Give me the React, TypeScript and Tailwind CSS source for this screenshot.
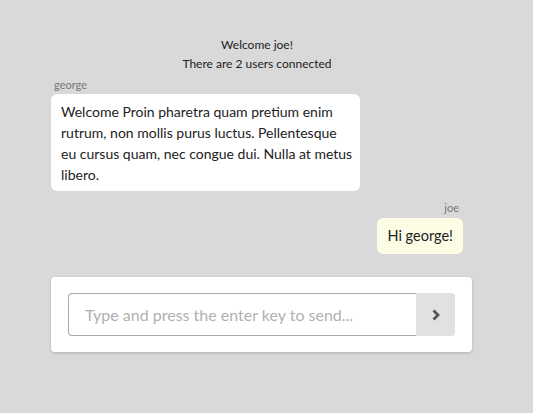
import React from "react";

export default function App() {
  return (
    <div className="min-h-[413px] w-[533px] bg-[#d9d9d9] font-['Lato',sans-serif] text-[#222]">
      <div className="ml-[51px] w-[421px] pt-[35px]">
        <div className="w-[412px] flex flex-col">
          <div className="text-center text-[12px] leading-[19px] text-[#222]">
            <div>Welcome joe!</div>
            <div>There are 2 users connected</div>
          </div>
          <div className="mt-[5px] pl-[3px] text-[11px] leading-[14px] text-[#777]">george</div>
          <div className="mt-[2px] w-[309px] rounded-[6px] bg-white pl-[10px] pr-[6px] pt-[7px] pb-[6px] text-[14px] leading-[21px] text-[#222]">
            Welcome Proin pharetra quam pretium enim rutrum, non mollis purus luctus. Pellentesque eu cursus quam, nec congue dui. Nulla at metus libero.
          </div>
          <div className="mt-[10px] self-end pr-[4px] text-[11px] leading-[14px] text-[#777]">joe</div>
          <div className="mt-[3px] self-end rounded-[6px] bg-[#fdfde6] px-[10px] pt-[7px] pb-[8px] text-[14.5px] leading-[21px] text-[#222]">
            Hi george!
          </div>
        </div>
        <div className="mt-[23px] rounded-[4px] bg-white px-[17px] py-[16px] shadow-[0_1px_3px_rgba(0,0,0,0.2)]">
          <div className="flex h-[43px]">
            <input
              className="h-full flex-1 rounded-l-[4px] border border-[#aaa] border-r-0 px-[16px] text-[16px] text-[#222] placeholder:text-[#b0b0b0] outline-none"
              placeholder="Type and press the enter key to send..."
            />
            <button className="flex h-full w-[39px] items-center justify-center rounded-r-[4px] bg-[#e0e1e2] text-[#555]">
              <svg width="10" height="12" viewBox="0 0 10 12">
                <path d="M2.5 1.5 L7 6 L2.5 10.5" fill="none" stroke="#555" strokeWidth="2.8" />
              </svg>
            </button>
          </div>
        </div>
      </div>
    </div>
  );
}
